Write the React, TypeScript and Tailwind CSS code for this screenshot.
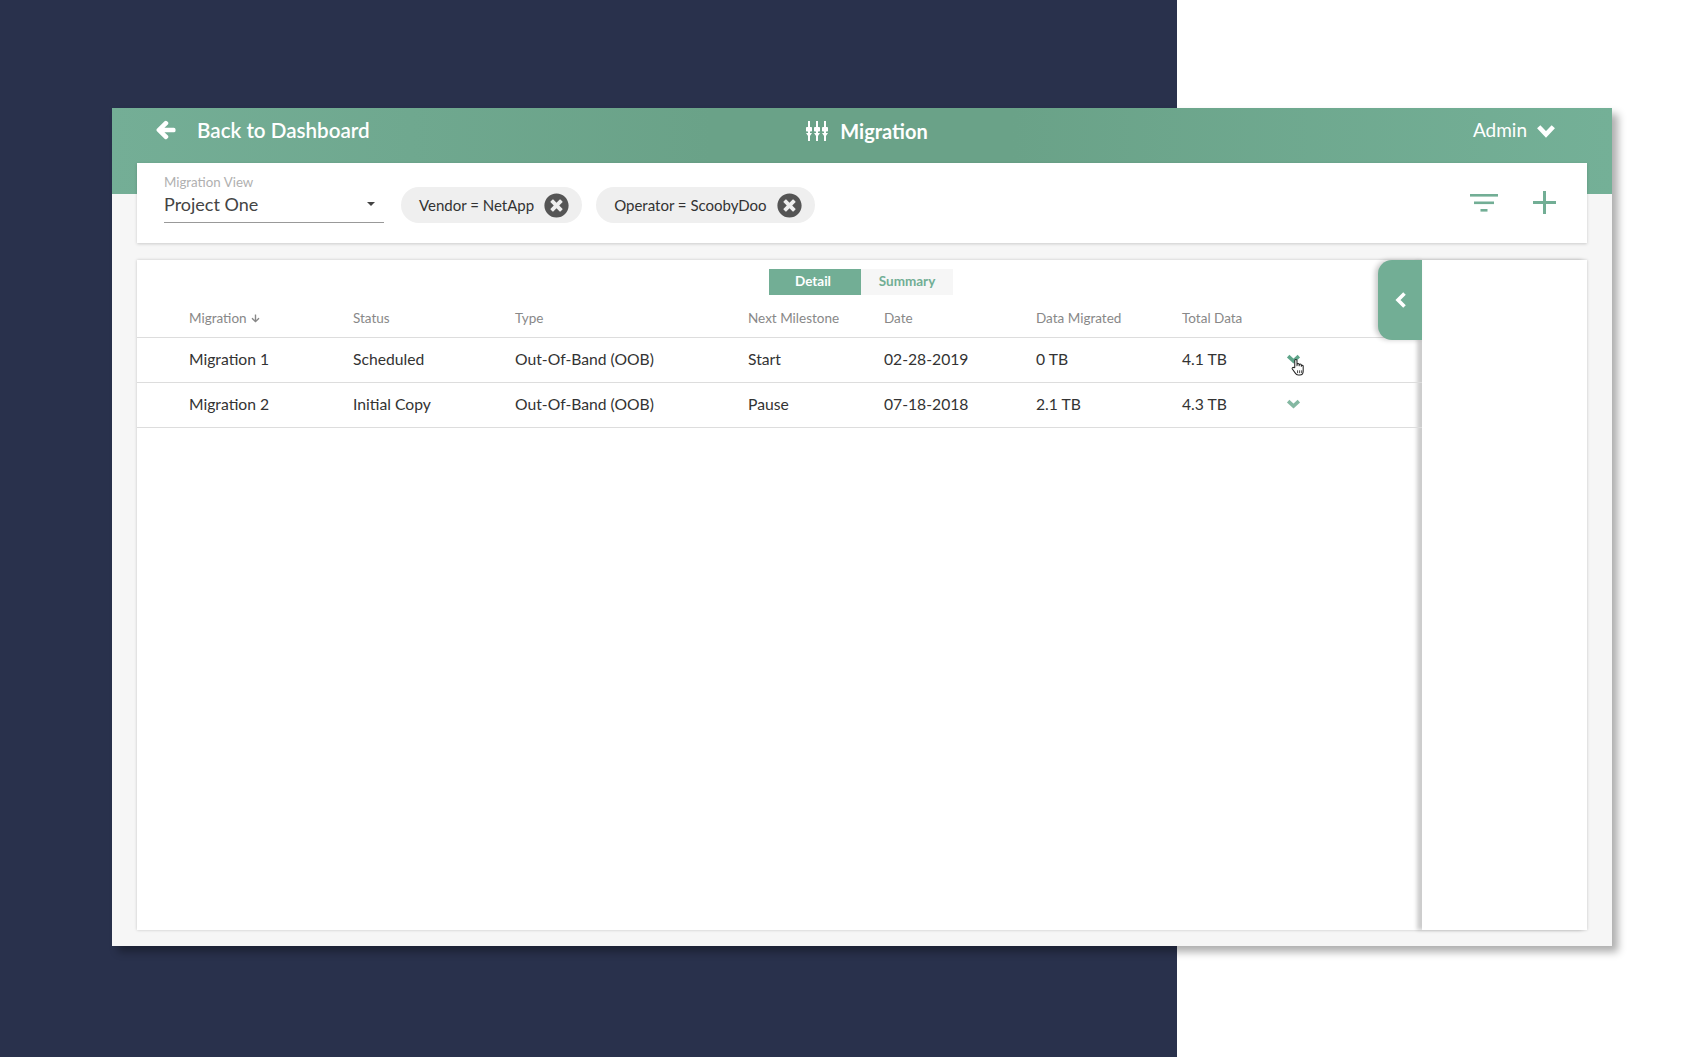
import React from 'react';
import { FaArrowDown, FaArrowLeft, FaTimesCircle } from 'react-icons/fa';

const gridCols = 'grid grid-cols-[164px_162px_233px_136px_152px_146px_104px_1fr] pl-[52px] items-center';

const rows = [
  { name: 'Migration 1', status: 'Scheduled', type: 'Out-Of-Band (OOB)', next: 'Start', date: '02-28-2019', migrated: '0 TB', total: '4.1 TB', chevron: '#5fa58a' },
  { name: 'Migration 2', status: 'Initial Copy', type: 'Out-Of-Band (OOB)', next: 'Pause', date: '07-18-2018', migrated: '2.1 TB', total: '4.3 TB', chevron: '#84b8a2' },
];

function SlidersIcon() {
  return (
    <svg width="22" height="22" viewBox="0 0 22 22" fill="#fff">
      {[3, 11, 19].map((x) => (
        <g key={x}>
          <rect x={x - 1} y="1" width="2" height="20" />
          <rect x={x - 3} y="7" width="6" height="4.5" rx="0.8" />
          <path d={`M${x - 3} 13h6l-2.4 3.5h-1.2z`} />
        </g>
      ))}
    </svg>
  );
}

function FilterIcon() {
  return (
    <svg width="28" height="18" viewBox="0 0 28 18" fill="#72ae95">
      <rect x="0" y="0" width="28" height="2.6" />
      <rect x="4" y="7.5" width="20" height="2.6" />
      <rect x="10.5" y="15" width="7" height="2.6" />
    </svg>
  );
}

function PlusIcon() {
  return (
    <svg className="-mt-[2px]" width="23" height="23" viewBox="0 0 23 23" fill="#72ae95">
      <rect x="0" y="10" width="23" height="3" />
      <rect x="10" y="0" width="3" height="23" />
    </svg>
  );
}

function ChevronDown({ w, h, color, stroke }: { w: number; h: number; color: string; stroke: number }) {
  return (
    <svg width={w} height={h} viewBox={`0 0 ${w} ${h}`} fill="none" stroke={color} strokeWidth={stroke}>
      <path d={`M${stroke * 0.6} ${stroke * 0.6}L${w / 2} ${h - stroke * 0.8}L${w - stroke * 0.6} ${stroke * 0.6}`} />
    </svg>
  );
}

function Chip({ label }: { label: string }) {
  return (
    <div className="flex h-[36px] items-center gap-[10px] rounded-full bg-[#efefef] pl-[18px] pr-[13px] text-[15px] text-[#333]">
      <span>{label}</span>
      <FaTimesCircle className="h-[25px] w-[25px] text-[#555]" />
    </div>
  );
}

export default function App() {
  return (
    <div className="relative h-[1057px] w-[1703px] overflow-hidden bg-white pl-[112px] pt-[108px] font-['Lato',sans-serif]">
      <div className="absolute inset-y-0 left-0 w-[1177px] bg-[#29314c]" />

      <div className="relative flex h-[838px] w-[1500px] flex-col bg-[#f6f6f6] bg-[linear-gradient(to_right,#74ae96,#6aa288_40%,#6aa288_60%,#74b097)] bg-[length:100%_86px] bg-no-repeat px-[25px] pb-[16px] shadow-[6px_6px_8px_rgba(0,0,0,0.32)]">
        {/* Header */}
        <div className="grid h-[55px] shrink-0 grid-cols-3 items-center pb-[10px] text-white">
          <div className="flex items-center gap-[21px] pl-[19px] text-[20.6px] font-semibold">
            <FaArrowLeft className="h-[20px] w-[20px]" stroke="currentColor" strokeWidth={40} />
            <span>Back to Dashboard</span>
          </div>
          <div className="flex items-center justify-center gap-[12px] pl-[10px] text-[20px] font-bold">
            <SlidersIcon />
            <span>Migration</span>
          </div>
          <div className="flex items-center justify-end gap-[9px] pr-[31px] text-[19px]">
            <span>Admin</span>
            <ChevronDown w={20} h={14} color="#fff" stroke={4.5} />
          </div>
        </div>

        {/* Filter bar */}
        <div className="flex h-[80px] shrink-0 items-center bg-white pl-[27px] pr-[31px] shadow-[0_1px_3px_rgba(0,0,0,0.18)]">
          <div className="w-[220px] self-start pt-[11px]">
            <div className="text-[13.3px] leading-[16px] text-[#b0b0b0]">Migration View</div>
            <div className="flex h-[33px] items-center justify-between border-b border-[#999] pb-[4px] pr-[9px] text-[18px] text-[#444]">
              <span>Project One</span>
              <span className="h-0 w-0 border-x-[4px] border-t-[4px] border-x-transparent border-t-[#444]" />
            </div>
          </div>
          <div className="ml-[17px] mt-[4px] flex gap-[14px]">
            <Chip label="Vendor = NetApp" />
            <Chip label="Operator = ScoobyDoo" />
          </div>
          <div className="ml-auto flex items-center gap-[35px]">
            <FilterIcon />
            <PlusIcon />
          </div>
        </div>

        {/* Main card */}
        <div className="mt-[17px] flex min-h-0 flex-1 bg-white shadow-[0_0_3px_rgba(0,0,0,0.2)]">
          <div className="relative flex-1">
            <div className="flex pl-[632px] pt-[9px]">
              <div className="flex h-[26px] w-[92px] items-center justify-center bg-[#72ae95] pb-[2px] pr-[4px] text-[13.5px] font-bold text-white">Detail</div>
              <div className="flex h-[26px] w-[92px] items-center justify-center bg-[#f6f6f6] pb-[2px] text-[13.5px] font-bold text-[#72ae95]">Summary</div>
            </div>

            <div className={`${gridCols} h-[43px] border-b border-[#ddd] pt-[4px] text-[13.5px] text-[#888]`}>
              <div className="flex items-center gap-[4px]">Migration <FaArrowDown className="h-[9px] w-[9px]" /></div>
              <div>Status</div>
              <div>Type</div>
              <div>Next Milestone</div>
              <div>Date</div>
              <div>Data Migrated</div>
              <div>Total Data</div>
              <div />
            </div>

            {rows.map((row) => (
              <div key={row.name} className={`${gridCols} h-[45px] border-b border-[#ddd] text-[15.7px] text-[#333]`}>
                <div>{row.name}</div>
                <div>{row.status}</div>
                <div>{row.type}</div>
                <div>{row.next}</div>
                <div>{row.date}</div>
                <div>{row.migrated}</div>
                <div>{row.total}</div>
                <div className="-mt-[3px]">
                  <ChevronDown w={15} h={10} color={row.chevron} stroke={3.6} />
                </div>
              </div>
            ))}

            {/* pointer over the first chevron */}
            <svg className="absolute left-[1154px] top-[98px]" width="15" height="19" viewBox="0 0 16 20" fill="#fff" stroke="#222" strokeWidth="1.1" strokeLinejoin="round">
              <path d="M4 10V2.6a1.2 1.2 0 0 1 2.4 0V8l.1-1.2a1.1 1.1 0 0 1 2.2 0V8.2l.1-.8a1.1 1.1 0 0 1 2.2 0v1.2a1 1 0 0 1 2 0V14c0 2.4-1.4 4-3.6 4H7.6c-1.4 0-2.2-.7-3-2L1.4 11.6c-.8-1.2.9-2.4 1.8-1.3z" />
              <path d="M7 13v3M9.2 13v3M11.4 13v3" fill="none" strokeWidth="0.9" />
            </svg>

            {/* Panel toggle */}
            <div className="absolute right-0 top-0 z-10 flex h-[80px] w-[44px] items-center justify-center rounded-l-[14px] bg-[#72ae95] shadow-[-3px_0_5px_rgba(0,0,0,0.2)]">
              <svg width="11" height="16" viewBox="0 0 11 16" fill="none" stroke="#fff" strokeWidth="3.6">
                <path d="M9.5 1.5L3 8l6.5 6.5" />
              </svg>
            </div>
          </div>
          <div className="w-[165px] shrink-0 bg-white shadow-[-5px_0_4px_rgba(0,0,0,0.2)]" />
        </div>
      </div>
    </div>
  );
}
